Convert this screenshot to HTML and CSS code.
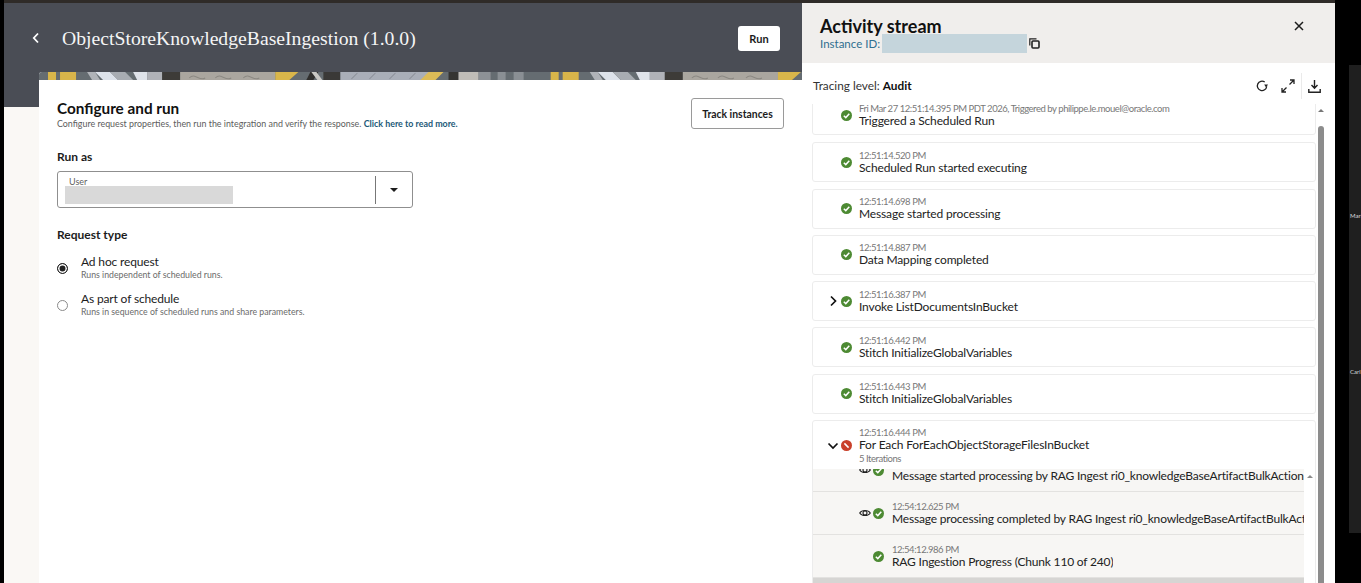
FILE: index.html
```html
<!DOCTYPE html>
<html lang="en">
<head>
  <meta charset="UTF-8" />
  <title>ObjectStoreKnowledgeBaseIngestion (1.0.0)</title>
  <link rel="stylesheet" href="styles.css">
</head>
<body>
  <svg class="defs" width="0" height="0">
    <symbol id="ok" viewBox="0 0 13 13">
      <circle cx="6.5" cy="6.5" r="5.5" fill="#4d8a33" />
      <path d="M3.8 6.7l2 1.9 3.5-3.8" fill="none" stroke="#fff" stroke-width="1.5" />
    </symbol>
    <symbol id="failed" viewBox="0 0 13 13">
      <circle cx="6.5" cy="6.5" r="5.5" fill="#c9402b" />
      <path d="M4.4 4.4l4.2 4.2" fill="none" stroke="#fff" stroke-width="1.5" />
    </symbol>
    <symbol id="eye" viewBox="0 0 12 12">
      <path d="M.7 6C2.8 2.6 9.2 2.6 11.3 6 9.2 9.4 2.8 9.4.7 6z" fill="none" stroke="#222" stroke-width="1.1" />
      <circle cx="6" cy="6" r="2" fill="none" stroke="#222" stroke-width="1.1" />
    </symbol>
    <g id="stripe-run">
      <rect x="9" width="8" height="8" fill="#d9b64a" />
      <rect x="21" width="16" height="8" fill="#d8b44a" />
      <path d="M48 0h8l5 8h-8z" fill="#b0b3b8" />
      <path d="M56 0h15l8 8h-15z" fill="#dde2ea" />
      <path d="M71 0h15l8 8h-15z" fill="#a8acb2" />
      <path d="M94 0h14v8h-10z" fill="#dfe3ea" />
      <path d="M108 0h15v8h-15z" fill="#b0b2b8" />
      <rect x="123" width="18" height="8" fill="#3d3b38" />
      <rect x="141" width="95" height="8" fill="#aaa69f" />
      <path d="M150 6c6-6 10 4 16 0M176 6c6-6 10 4 16 0M204 6c6-6 10 4 16 0" fill="none" stroke="#8c8983" />
      <path d="M236 0h9l5 8h-14zM241 0h18l-9 8h-9z" fill="#d9b64a" />
      <path d="M267 8l4-8h8l-5 8z" fill="#302f2d" />
      <path d="M272 0h5l6 8h-5z" fill="#c9c8c4" />
      <rect x="284" width="17" height="8" fill="#3a3937" />
      <rect x="301" width="90" height="8" fill="#a9aeb8" />
      <path d="M312 7l6-6M330 7l6-6M350 7l6-6M370 7l6-6" fill="none" stroke="#8b8f98" />
      <path d="M389 0h15l-8 8h-15z" fill="#dcbb57" />
      <rect x="409" width="10" height="8" fill="#353432" />
      <rect x="419" width="20" height="8" fill="#c0bdb8" />
      <rect x="439" width="12" height="8" fill="#8d9196" />
      <rect x="458" width="8" height="8" fill="#8a8f94" />
      <rect x="474" width="10" height="8" fill="#8a8f94" />
    </g>
  </svg>

  <div class="stage">
    <main class="main">
      <header class="page-head">
        <svg class="back" width="8" height="12" viewBox="0 0 8 12"><path d="M6 1.5L1.8 6 6 10.500" fill="none" stroke="#fff" stroke-width="1.8" /></svg>
        <h1>ObjectStoreKnowledgeBaseIngestion (1.0.0)</h1>
        <button class="run-button">Run</button>
      </header>

      <div class="content">
        <section class="config-card">
          <div class="stripe-wrap">
            <svg class="stripe" viewBox="0 0 762 8" preserveAspectRatio="none">
              <rect width="762" height="8" fill="#656c71" />
              <use href="#stripe-run" />
              <use href="#stripe-run" x="502" />
            </svg>
          </div>
          <div class="config-body">
            <div class="config-head">
              <div>
                <h2>Configure and run</h2>
                <p class="hint">Configure request properties, then run the integration and verify the response. <a href="#">Click here to read more.</a></p>
              </div>
              <button class="track-button">Track instances</button>
            </div>

            <h3 class="run-as">Run as</h3>
            <div class="select-box">
              <div class="select-value">
                <span class="select-label">User</span>
                <span class="redacted-user"></span>
              </div>
              <div class="select-arrow"><span class="caret"></span></div>
            </div>

            <h3 class="request-type">Request type</h3>
            <label class="option">
              <span class="radio checked"></span>
              <span>
                <span class="option-title">Ad hoc request</span>
                <span class="option-sub">Runs independent of scheduled runs.</span>
              </span>
            </label>
            <label class="option">
              <span class="radio"></span>
              <span>
                <span class="option-title">As part of schedule</span>
                <span class="option-sub">Runs in sequence of scheduled runs and share parameters.</span>
              </span>
            </label>
          </div>
        </section>
      </div>
    </main>

    <aside class="drawer">
      <div class="drawer-head">
        <div>
          <h2>Activity stream</h2>
          <div class="instance">
            <span class="instance-label">Instance ID:</span>
            <span class="redacted-id"></span>
            <svg width="11" height="11" viewBox="0 0 11 11"><path d="M.8 7.500V.8h6.700" fill="none" stroke="#222" stroke-width="1.200" /><rect x="3" y="3" width="7" height="7" rx="1" fill="none" stroke="#222" stroke-width="1.600" /></svg>
          </div>
        </div>
        <svg class="close" width="10" height="10" viewBox="0 0 10 10"><path d="M1 1l8 8M9 1L1 9" stroke="#1c1c1c" stroke-width="1.500" /></svg>
      </div>

      <div class="toolbar">
        <span class="tracing">Tracing level: <b>Audit</b></span>
        <div class="tools">
          <svg class="tool-refresh" width="12" height="12" viewBox="0 0 12 12"><path d="M10.700 6.500A4.700 4.700 0 1 1 8.700 2" fill="none" stroke="#222" stroke-width="1.300" /><path d="M8.200 4.600h3.800L10.100 7.600z" fill="#222" /></svg>
          <svg width="14" height="14" viewBox="0 0 14 14"><path d="M8.500 5.500L13 1M9 1h4v4M5.500 8.500L1 13M1 9v4h4" fill="none" stroke="#222" stroke-width="1.300" /></svg>
          <span class="tool-divider"></span>
          <svg width="13" height="13" viewBox="0 0 13 13"><path d="M6.500 0v8M3.500 5l3 3.200 3-3.200M.8 9v3.200h11.400V9" fill="none" stroke="#222" stroke-width="1.400" /></svg>
        </div>
      </div>

      <div class="stream-wrap">
        <div class="stream">
          <div class="event first">
            <span class="toggle"></span>
            <svg class="status"><use href="#ok" /></svg>
            <div class="event-text"><div class="time">Fri Mar 27 12:51:14.395 PM PDT 2026, Triggered by philippe.le.mouel@oracle.com</div><div class="title">Triggered a Scheduled Run</div></div>
          </div>
          <div class="event">
            <span class="toggle"></span>
            <svg class="status"><use href="#ok" /></svg>
            <div class="event-text"><div class="time">12:51:14.520 PM</div><div class="title">Scheduled Run started executing</div></div>
          </div>
          <div class="event">
            <span class="toggle"></span>
            <svg class="status"><use href="#ok" /></svg>
            <div class="event-text"><div class="time">12:51:14.698 PM</div><div class="title">Message started processing</div></div>
          </div>
          <div class="event">
            <span class="toggle"></span>
            <svg class="status"><use href="#ok" /></svg>
            <div class="event-text"><div class="time">12:51:14.887 PM</div><div class="title">Data Mapping completed</div></div>
          </div>
          <div class="event">
            <span class="toggle"><svg width="8" height="12" viewBox="0 0 8 12"><path d="M2 1.500L6.500 6 2 10.500" fill="none" stroke="#111" stroke-width="1.700" /></svg></span>
            <svg class="status"><use href="#ok" /></svg>
            <div class="event-text"><div class="time">12:51:16.387 PM</div><div class="title">Invoke ListDocumentsInBucket</div></div>
          </div>
          <div class="event">
            <span class="toggle"></span>
            <svg class="status"><use href="#ok" /></svg>
            <div class="event-text"><div class="time">12:51:16.442 PM</div><div class="title">Stitch InitializeGlobalVariables</div></div>
          </div>
          <div class="event">
            <span class="toggle"></span>
            <svg class="status"><use href="#ok" /></svg>
            <div class="event-text"><div class="time">12:51:16.443 PM</div><div class="title">Stitch InitializeGlobalVariables</div></div>
          </div>
          <div class="event-group">
            <div class="group-head">
              <span class="toggle"><svg width="12" height="8" viewBox="0 0 12 8"><path d="M1.500 1.500L6 6l4.500-4.500" fill="none" stroke="#111" stroke-width="1.700" /></svg></span>
              <svg class="status"><use href="#failed" /></svg>
              <div><div class="time">12:51:16.444 PM</div><div class="title">For Each ForEachObjectStorageFilesInBucket</div><div class="time">5 Iterations</div></div>
            </div>
            <div class="iter-wrap">
              <div class="iterations">
                <div class="iter first-iter">
                  <svg class="eye"><use href="#eye" /></svg>
                  <svg class="status"><use href="#ok" /></svg>
                  <div class="iter-text"><div class="time">&nbsp;</div><div class="title">Message started processing by RAG Ingest ri0_knowledgeBaseArtifactBulkAction</div></div>
                </div>
                <div class="iter">
                  <svg class="eye"><use href="#eye" /></svg>
                  <svg class="status"><use href="#ok" /></svg>
                  <div class="iter-text"><div class="time">12:54:12.625 PM</div><div class="title">Message processing completed by RAG Ingest ri0_knowledgeBaseArtifactBulkAct</div></div>
                </div>
                <div class="iter">
                  <span class="eye"></span>
                  <svg class="status"><use href="#ok" /></svg>
                  <div class="iter-text"><div class="time">12:54:12.986 PM</div><div class="title">RAG Ingestion Progress (Chunk 110 of 240)</div></div>
                </div>
                <div class="iter-next"></div>
              </div>
              <div class="iter-gutter"><span class="small-up"></span></div>
            </div>
          </div>
        </div>
        <div class="scrollbar">
          <span class="scroll-up"></span>
          <span class="scroll-thumb"></span>
        </div>
      </div>
    </aside>

    <div class="backdrop">
      <div class="other-window">
        <span>Mari</span>
        <span>Carl</span>
      </div>
    </div>
  </div>
</body>
</html>
```

FILE: styles.css
```css
* { box-sizing: border-box; }
html, body { height: 100%; }
body {
  margin: 0;
  overflow: hidden;
  background: #000;
  font-family: Lato, "Noto Sans", Arial, sans-serif;
  color: #1c1c1c;
}
h1, h2, h3, p { margin: 0; }
.defs { position: absolute; }

.stage { display: flex; height: 583px; }

/* left side */
.main {
  width: 798px;
  flex: none;
  margin-left: 4px;
  border-top: 3px solid #2f2b28;
  background: #faf8f5;
  display: flex;
  flex-direction: column;
}
.page-head {
  height: 104px;
  flex: none;
  background: #4a4d55;
  display: flex;
  align-items: flex-start;
  padding: 23px 22px 0 28px;
}
.back { margin-top: 6px; margin-right: 22px; }
.page-head h1 {
  flex: 1;
  margin-top: -1px;
  font: 400 19.7px/27px "Liberation Serif", "Times New Roman", serif;
  color: #f5f5f5;
}
.run-button {
  width: 42px;
  height: 25px;
  padding: 0;
  border: 0;
  border-radius: 3px;
  background: #fff;
  font: 700 11px Lato, Arial, sans-serif;
  color: #1c1c1c;
}
.content { flex: 1; min-height: 0; padding-left: 35px; }
.config-card {
  height: calc(100% + 35px);
  margin-top: -35px;
  background: #fff;
  border-radius: 3px 0 0 0;
  overflow: hidden;
}
.stripe-wrap { height: 8px; overflow: hidden; }
.stripe { display: block; width: 100%; height: 8px; filter: blur(0.6px); }
.config-body { padding: 18px 18px 0 18px; }
.config-head { display: flex; justify-content: space-between; }
.config-head h2 { font-size: 15.3px; line-height: 20px; font-weight: 700; color: #111; }
.hint { font-size: 8.9px; line-height: 11px; color: #5c5c5c; }
.hint a { color: #1d5a78; font-weight: 700; text-decoration: none; }
.track-button {
  width: 93px;
  height: 31px;
  padding: 0;
  background: #fff;
  border: 1px solid #9a9a9a;
  border-radius: 3px;
  font: 700 10.4px Lato, Arial, sans-serif;
  color: #1c1c1c;
}
h3 { font-size: 12px; line-height: 16px; font-weight: 700; color: #1c1c1c; }
.run-as { margin-top: 20px; }
.select-box {
  width: 356px;
  height: 37px;
  margin-top: 6px;
  border: 1px solid #8f8f8f;
  border-radius: 3px;
  display: flex;
  align-items: center;
}
.select-value { flex: 1; height: 100%; padding-left: 7px; }
.select-label { display: block; padding: 5px 0 0 4px; font-size: 9px; line-height: 10px; color: #5f5f5f; }
.redacted-user { display: block; width: 168px; height: 18px; margin-top: -1px; background: #d9d9d9; }
.select-arrow {
  width: 37px;
  height: 28px;
  border-left: 1px solid #777;
  display: flex;
  align-items: center;
  justify-content: center;
}
.caret { border: 4px solid transparent; border-top-color: #1c1c1c; border-bottom: 0; }

.request-type { margin-top: 19px; margin-bottom: 11px; }
.option { display: flex; align-items: center; gap: 13px; margin-bottom: 11px; }
.radio { width: 11px; height: 11px; flex: none; margin-top: 2px; border: 1px solid #8a8a8a; border-radius: 50%; }
.radio.checked { border-color: #222; background: #222; box-shadow: inset 0 0 0 1.500px #fff; }
.option-title { display: block; font-size: 12px; letter-spacing: -0.15px; line-height: 16px; color: #1c1c1c; }
.option-sub { display: block; font-size: 8.75px; line-height: 10px; color: #6b6b6b; }

/* activity stream */
.drawer {
  width: 533px;
  flex: none;
  border-top: 3px solid #2f2b28;
  background: #fff;
  display: flex;
  flex-direction: column;
}
.drawer-head {
  height: 60px;
  flex: none;
  background: #f0eeec;
  display: flex;
  justify-content: space-between;
  padding: 13px 31px 0 18px;
}
.drawer-head h2 { font-size: 18px; line-height: 20px; font-weight: 700; color: #111; }
.instance { display: flex; align-items: center; font-size: 11.5px; line-height: 16px; color: #2f6f8f; margin-top: -2px; }
.instance-label { width: 62px; white-space: nowrap; }
.redacted-id { width: 145px; height: 19px; margin-right: 2px; background: #c5d5dc; }
.close { margin-top: 5px; }
.toolbar {
  height: 41px;
  flex: none;
  display: flex;
  align-items: center;
  justify-content: space-between;
  padding: 5px 14px 0 11px;
}
.tracing { font-size: 11.8px; color: #333; margin-top: -1px; }
.tracing b { font-weight: 700; color: #111; }
.tools { display: flex; align-items: center; }
.tool-refresh { margin-right: 13px; }
.tool-divider { width: 1px; height: 26px; margin: 0 6px; background: #eaeaea; }
.stream-wrap { flex: 1; min-height: 0; display: flex; padding-left: 10px; }
.stream { width: 504px; overflow: hidden; }
.event, .event-group {
  border: 1px solid #ececec;
  border-radius: 3px;
  margin-bottom: 6.300px;
}
.event {
  height: 40px;
  display: flex;
  align-items: center;
  padding-left: 13px;
}
.event-text { margin-top: -1px; }
.event.first { margin-top: -9px; margin-bottom: 7.300px; }
.event-group { height: 200px; }
.group-head { height: 48px; padding: 5px 0 4px 13px; display: flex; align-items: center; }
.group-head .time:last-child { margin-top: 1px; }
.group-head .title { line-height: 14px; }
.toggle { width: 14px; flex: none; display: flex; justify-content: center; }
.status { width: 13px; height: 13px; flex: none; margin-right: 6px; }
.time { font-size: 9.5px; letter-spacing: -0.45px; line-height: 11px; color: #787878; white-space: nowrap; }
.title { font-size: 12px; letter-spacing: -0.15px; line-height: 13px; color: #222; white-space: nowrap; }

.iter-wrap { display: flex; }
.iterations { width: 491px; height: 120px; overflow: hidden; background: #f7f6f4; }
.iter {
  height: 43px;
  border-bottom: 1px solid #e3e2e0;
  display: flex;
  align-items: center;
  padding-left: 46px;
}
.iter .title { letter-spacing: -0.18px; }
.iter-text { margin-top: -1px; }
.first-iter { margin-top: -20px; }
.eye { width: 12px; height: 12px; flex: none; margin-right: 1px; }
.iter .status { margin-right: 7px; }
.iter-text { min-width: 0; overflow: hidden; }
.iter-next { height: 10px; background: #d6d5d3; }
.iter-gutter { flex: 1; padding: 6px 0 0 3px; }
.small-up { display: block; width: 0; border: 3px solid transparent; border-bottom-color: #8a8a8a; border-top: 0; }

.scrollbar { width: 6px; margin-left: 2px; display: flex; flex-direction: column; align-items: center; }
.scroll-up { margin-top: 5px; border: 3.500px solid transparent; border-bottom-color: #777; border-top: 0; }
.scroll-thumb { flex: 1; width: 6px; margin-top: 14px; border-radius: 3px 3px 0 0; background: #8c8c8c; }

.backdrop { flex: 1; min-width: 0; padding: 65px 0 0 14px; background: #000; }
.other-window {
  height: 468px;
  background: #1f1f1f;
  overflow: hidden;
  padding-top: 147px;
  font-size: 6px;
  line-height: 8px;
  color: #ddd;
}
.other-window span { display: block; height: 156px; padding-left: 1px; white-space: nowrap; }
```
